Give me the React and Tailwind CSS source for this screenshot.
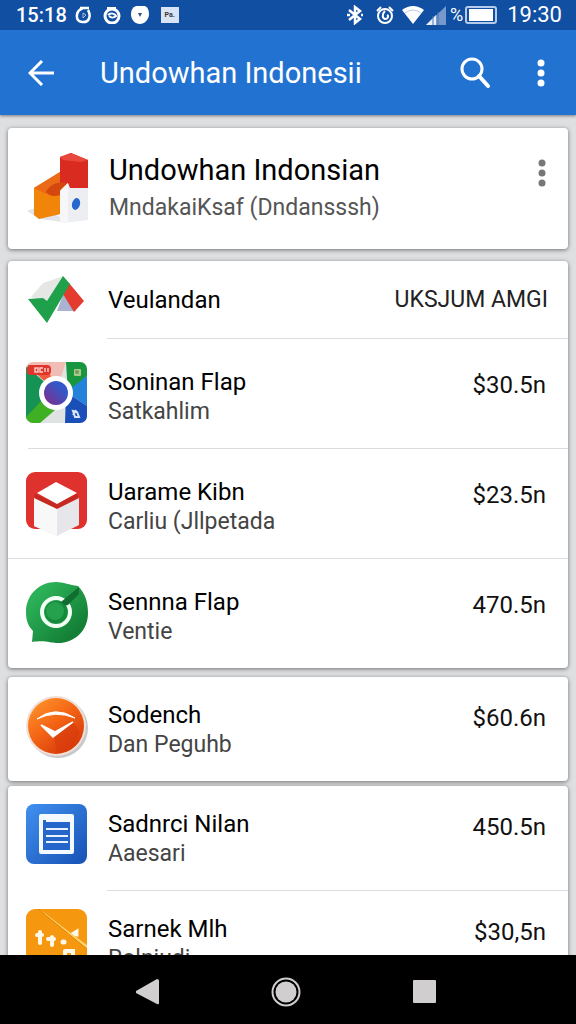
function BoxesIcon() {
  return (
    <svg viewBox="0 0 62 72" className="h-[72px] w-[62px]" aria-hidden="true">
      <path d="M0 59 L10 55 L36 66 L36 70 L12 67 Z" fill="#e3e4ea" />
      <path d="M33 5 L44 1 L61 8 V37 H33 Z" fill="#d92b20" />
      <path d="M33 5 L44 1 L61 8 L54 10 L36 8 Z" fill="#e8493c" />
      <path d="M7 36 L33 20 V34 L41 31 L34 39 L34 62 L12 67 L7 63 Z" fill="#f0850a" />
      <path d="M7 36 L33 20 V31 L19 42 Z" fill="#ea6a18" />
      <path d="M19 40 C23 32 31 29 41 31 L34 37 L33 43 C27 45 22 44 19 40 Z" fill="#d4470f" />
      <path d="M33 39 L41 31 L43 36 L61 36 V68 L36 71 L33 69 Z" fill="#eceef2" />
      <path d="M33 39 L41 31 L41 70 L36 71 L33 69 Z" fill="#f7f7f9" />
      <ellipse cx="49" cy="52" rx="4" ry="6" fill="#2467cf" transform="rotate(15 49 52)" />
    </svg>
  );
}

function CheckIcon() {
  return (
    <svg viewBox="0 0 62 48" className="h-12 w-[62px]" aria-hidden="true">
      <path d="M5 21 L17 7 L38 0 L22 27 Z" fill="#e5e7e5" />
      <path d="M38 16 L46 22 L50 35 L31 35 Z" fill="#aab3d2" />
      <path d="M43 7 L58 25 L48 36 L37 18 Z" fill="#e33b2e" />
      <path d="M2 23 L17 22 L21 25 L37 0 L44 8 L21 47 Z" fill="#1fa04a" />
    </svg>
  );
}

function CameraIcon() {
  return (
    <svg viewBox="0 0 61 61" className="size-[61px]" aria-hidden="true">
      <defs>
        <clipPath id="camera-clip">
          <rect width="61" height="61" rx="7" />
        </clipPath>
        <linearGradient id="camera-lens" x1="0" y1="1" x2="1" y2="0">
          <stop offset="0.1" stopColor="#7a3090" />
          <stop offset="0.7" stopColor="#3558c8" />
        </linearGradient>
      </defs>
      <g clipPath="url(#camera-clip)">
        <rect width="61" height="61" fill="#dfe3e1" />
        <path d="M0 4 L30 30 L0 57 Z" fill="#159254" />
        <path d="M0 0 H40 L30 30 Z" fill="#f0bdb4" />
        <path d="M0 2 L30 30 L24 12 Z" fill="#ef5a3a" />
        <path d="M40 0 H61 V14 L42 32 Z" fill="#17963f" />
        <path d="M61 14 V44 L40 30 Z" fill="#2383da" />
        <path d="M40 30 L61 44 V61 H39 Z" fill="#1b4fb8" />
        <path d="M0 55 L22 32 L36 42 L14 61 H0 Z" fill="#3fb024" />
        <rect x="1" y="3" width="24" height="10" rx="4" fill="#e0352b" />
        <g fill="none" stroke="#fbd0ca" strokeWidth="1.4">
          <rect x="9" y="6" width="3" height="4" />
          <path d="M17 6 h-3 v4 h3 M19 6 v4 M22 6 v4" />
        </g>
        <rect x="48" y="7" width="7" height="7" rx="1" fill="#a9c98b" />
        <circle cx="51" cy="10" r="2" fill="#6e9f58" />
        <circle cx="30" cy="31" r="17" fill="#fff" />
        <circle cx="30" cy="31" r="12" fill="url(#camera-lens)" />
        <path d="M47 49 L51 50 L53 55 L49 55 Z M50 48 L47 53" fill="none" stroke="#d7e4fa" strokeWidth="2" />
      </g>
    </svg>
  );
}

function CubeIcon() {
  return (
    <svg viewBox="0 0 61 64" className="h-16 w-[61px]" aria-hidden="true">
      <rect width="61" height="57" rx="9" fill="#df312d" />
      <path d="M8 25 L31 36 L53 25 V53 L31 64 L8 54 Z" fill="#e6e6eb" />
      <path d="M8 25 L31 36 V64 L8 54 Z" fill="#f8f8f9" />
      <path d="M9 22 L30 31 L51 22 L53 26 L31 37 L8 26 Z" fill="#c5291f" />
      <path d="M30 10 L51 21 L31 32 L11 21 Z" fill="#fff" />
    </svg>
  );
}

function ChatIcon() {
  return (
    <svg viewBox="0 0 62 62" className="size-[62px]" aria-hidden="true">
      <defs>
        <linearGradient id="chat-fill" x1="0" y1="0" x2="1" y2="1">
          <stop offset="0.2" stopColor="#2bb158" />
          <stop offset="0.8" stopColor="#148036" />
        </linearGradient>
      </defs>
      <path d="M30 0 C38 0 43 3 52 4 C59 11 62 20 62 31 C62 49 48 62 30 61 C24 61 20 58 6 60 L7 49 C2 44 0 38 0 30 C0 13 13 0 30 0 Z" fill="url(#chat-fill)" />
      <circle cx="30" cy="30" r="14" fill="none" stroke="#f1fff4" strokeWidth="4" />
      <path d="M53 5 L53 12 L42 23 L37 24 L35 20 Z" fill="#0f6e30" />
      <circle cx="30" cy="30" r="11" fill="#158a3a" />
      <circle cx="29" cy="29" r="9" fill="#25a14d" />
    </svg>
  );
}

function DialIcon() {
  return (
    <svg viewBox="0 0 63 65" className="h-[65px] w-[63px]" aria-hidden="true">
      <defs>
        <linearGradient id="dial-fill" x1="0.1" y1="0" x2="0.8" y2="0.9">
          <stop offset="0" stopColor="#ff962d" />
          <stop offset="0.5" stopColor="#f46515" />
          <stop offset="1" stopColor="#d63a0c" />
        </linearGradient>
      </defs>
      <circle cx="32" cy="33" r="30" fill="#c8c8cc" />
      <circle cx="30" cy="31" r="30" fill="#f1dfd5" />
      <circle cx="30" cy="31" r="28" fill="url(#dial-fill)" />
      <path d="M28 42 L47 27 L54 37 L44 55 L31 58 Z" fill="#d93a0b" opacity="0.6" />
      <path d="M11 24 Q29 10 49 23 Q29 15 11 24 Z" fill="#fff" stroke="#fff" strokeWidth="1" />
      <path d="M15 30 L27 42 L47 27 L29 37 Z" fill="#fff" stroke="#fff" strokeWidth="1.5" />
    </svg>
  );
}

function DocIcon() {
  return (
    <svg viewBox="0 0 61 60" className="h-[60px] w-[61px]" aria-hidden="true">
      <defs>
        <linearGradient id="doc-fill" x1="0" y1="0" x2="1" y2="1">
          <stop offset="0" stopColor="#4090ef" />
          <stop offset="1" stopColor="#1752b5" />
        </linearGradient>
      </defs>
      <rect width="61" height="60" rx="8" fill="url(#doc-fill)" />
      <rect x="13" y="10" width="35" height="40" rx="2" fill="#f4f9ff" />
      <path d="M17 16 H20 V18 H44 V46 H17 Z" fill="#2666cb" />
      <path d="M20 25 H42 M20 32 H42 M20 38 H42" stroke="#e9f3ff" strokeWidth="2" />
    </svg>
  );
}

function PencilIcon() {
  return (
    <svg viewBox="0 0 61 61" className="size-[61px]" aria-hidden="true">
      <rect width="61" height="61" rx="9" fill="#f6980f" />
      <g fill="none" stroke="#fff8e8" strokeWidth="4" strokeLinecap="round">
        <path d="M14 23 V34 M11 26 H16 M26 28 V36 M22 30 H28" />
        <path d="M46 25 L51 22 V26 Z" strokeWidth="3" />
        <path d="M37 33 h1" strokeWidth="5" />
        <path d="M39 42 H47 V46 M39 42 V46" />
      </g>
      <path d="M12 0 L61 40 V36 L42 22 L20 5 Z" fill="#ffd067" />
      <path d="M12 0 L61 40" stroke="#d98107" strokeWidth="1" />
    </svg>
  );
}

function MoreIcon({ className }) {
  return (
    <svg viewBox="0 0 8 28" className={className} fill="currentColor" aria-hidden="true">
      <circle cx="4" cy="4" r="3.5" />
      <circle cx="4" cy="14" r="3.5" />
      <circle cx="4" cy="24" r="3.5" />
    </svg>
  );
}

const groups = [
  {
    id: 'apps',
    className: 'mt-3',
    items: [
      { icon: CheckIcon, title: 'Veulandan', value: 'UKSJUM AMGI', single: true },
      { icon: CameraIcon, title: 'Soninan Flap', subtitle: 'Satkahlim', value: '$30.5n', divider: 'ml-[99px]' },
      { icon: CubeIcon, title: 'Uarame Kibn', subtitle: 'Carliu (Jllpetada', value: '$23.5n', divider: 'ml-5' },
      { icon: ChatIcon, title: 'Sennna Flap', subtitle: 'Ventie', value: '470.5n', divider: 'ml-0' },
    ],
  },
  {
    id: 'sodench',
    className: 'mt-[9px]',
    compact: true,
    items: [{ icon: DialIcon, title: 'Sodench', subtitle: 'Dan Peguhb', value: '$60.6n' }],
  },
  {
    id: 'more',
    className: 'mt-[5px]',
    compact: true,
    items: [
      { icon: DocIcon, title: 'Sadnrci Nilan', subtitle: 'Aaesari', value: '450.5n' },
      { icon: PencilIcon, title: 'Sarnek Mlh', subtitle: 'Rolniudi', value: '$30,5n', divider: 'ml-[99px]' },
    ],
  },
];

function AppRow({ item, compact }) {
  const Icon = item.icon;

  if (item.single) {
    return (
      <li className="flex h-[77px] items-center pr-5 pl-[18px]">
        <Icon />
        <h2 className="ml-5 flex-1 text-2xl leading-7">{item.title}</h2>
        <span className="text-[23px] leading-7 text-[#222]">{item.value}</span>
      </li>
    );
  }

  return (
    <li>
      {item.divider && <div className={`h-px bg-[#dcdcdc] ${item.divider}`} />}
      <div className={`flex items-start pr-[22px] pl-[18px] ${compact ? 'h-[104px] pt-[18px]' : 'h-[109px] pt-[23px]'}`}>
        <div className="w-[62px] shrink-0">
          <Icon />
        </div>
        <div className="ml-5 flex-1 pt-[6px]">
          <h2 className="text-2xl leading-7">{item.title}</h2>
          <p className="pt-0.5 text-[23px] leading-7 text-[#444]">{item.subtitle}</p>
        </div>
        <span className="pt-[9px] text-2xl leading-7 text-[#111]">{item.value}</span>
      </div>
    </li>
  );
}

function StatusBar() {
  return (
    <div className="flex h-[30px] shrink-0 items-center justify-between bg-[#114fa3] pr-[14px] pl-4 text-[22px] leading-none">
      <div className="flex items-center">
        <span className="mr-2 text-xl leading-none font-medium">15:18</span>
        <svg viewBox="0 0 16 18" className="mr-3 h-[18px] w-4" fill="none" stroke="currentColor" strokeWidth="2.5" aria-hidden="true">
          <path d="M8 2 C0 5 0 15 7 16 C15 17 16 9 13 4 M5 2 H14" />
          <path d="M8 7 L11 9 L8 12 Z" strokeWidth="1" opacity="0.6" />
        </svg>
        <svg viewBox="0 0 18 18" className="mr-[10px] size-[18px]" fill="none" stroke="currentColor" strokeWidth="3" aria-hidden="true">
          <circle cx="9" cy="10" r="7" />
          <path d="M5 9 C8 6 12 8 13 10 C11 12 8 12 6 10 M4 2 H13" strokeWidth="2" />
        </svg>
        <svg viewBox="0 0 18 18" className="mr-3 size-[18px]" aria-hidden="true">
          <path d="M5 0 H14 Q18 2 18 8 C18 14 13 18 9 18 C4 18 0 14 0 8 Q0 2 5 0 Z" fill="#fff" />
          <path d="M7 7 H11 L9 11 Z" fill="#2b4d80" />
        </svg>
        <span className="flex h-4 w-[18px] items-center justify-center bg-[#d8e3f5] text-[7px] font-bold text-[#333]">Pa.</span>
      </div>
      <div className="flex items-center">
        <svg viewBox="0 0 18 20" className="mr-3 h-5 w-[18px]" fill="none" stroke="currentColor" strokeWidth="2.5" aria-hidden="true">
          <path d="M3 5 L14 14 L9 18 V2 L14 6 L3 15 M1 10 H4 M15 10 H17" />
        </svg>
        <svg viewBox="0 0 18 18" className="mr-2 size-[18px]" fill="none" stroke="currentColor" strokeWidth="2" aria-hidden="true">
          <circle cx="9" cy="10" r="7" />
          <path d="M1 5 L5 1 M13 1 L17 5 M9 5 C6 8 6 12 9 13 C12 13 13 10 11 9" />
        </svg>
        <svg viewBox="0 0 22 18" className="mr-0.5 h-[18px] w-[22px]" fill="currentColor" aria-hidden="true">
          <path d="M0 4 Q11 -4 22 4 L11 18 Z" />
          <path d="M3 7 Q11 1 19 7" fill="none" stroke="#9db9e0" strokeWidth="0.7" />
        </svg>
        <svg viewBox="0 0 20 19" className="mr-1 h-[19px] w-5" aria-hidden="true">
          <path d="M0 19 L20 0 V19 Z" fill="#7798cb" />
          <path d="M0 19 L10 9 V19 Z" fill="#e8f0fb" />
          <path d="M7 10 V19 M12 6 V19" stroke="#4874b6" strokeWidth="1" />
        </svg>
        <span className="mr-0.5 text-lg leading-none">%</span>
        <svg viewBox="0 0 32 18" className="mr-[10px] h-[18px] w-8" aria-hidden="true">
          <rect x="1" y="1" width="30" height="16" rx="2" fill="none" stroke="#b5cbea" strokeWidth="2" />
          <rect x="4" y="3" width="24" height="12" fill="#fff" />
        </svg>
        <span>19:30</span>
      </div>
    </div>
  );
}

export default function App() {
  return (
    <div className="flex h-screen flex-col overflow-hidden bg-[#dedfe1] font-['Roboto','Liberation_Sans',sans-serif] text-black">
      <header className="z-10 shrink-0 bg-[#2273d1] text-white shadow-[0_1px_3px_rgba(0,0,0,0.45)]">
        <StatusBar />
        <div className="flex h-[85px] items-center pr-[31px] pl-7">
          <button type="button" aria-label="Back">
            <svg viewBox="0 0 26 26" className="size-[26px]" fill="none" stroke="currentColor" strokeWidth="3" aria-hidden="true">
              <path d="M14 1 L2 13 L14 25 M2 13 H26" />
            </svg>
          </button>
          <h1 className="ml-[46px] flex-1 text-[29px] leading-9">Undowhan Indonesii</h1>
          <button type="button" aria-label="Search" className="mr-[46px]">
            <svg viewBox="0 0 32 32" className="size-8" fill="none" stroke="currentColor" aria-hidden="true">
              <circle cx="13" cy="12" r="10" strokeWidth="3" />
              <path d="M20 19 L29 29" strokeWidth="4" strokeLinecap="round" />
            </svg>
          </button>
          <button type="button" aria-label="More options">
            <MoreIcon className="h-7 w-2" />
          </button>
        </div>
      </header>

      <main className="min-h-0 flex-1 overflow-hidden px-2 pt-[13px]">
        <section className="flex h-[121px] items-start rounded-sm bg-white pr-[22px] pl-[19px] shadow-[0_1px_4px_rgba(0,0,0,0.5)]">
          <div className="pt-6">
            <BoxesIcon />
          </div>
          <div className="ml-5 flex-1 pt-6">
            <h2 className="text-[29px] leading-9">Undowhan Indonsian</h2>
            <p className="pt-1 text-[23px] leading-8 text-[#555]">MndakaiKsaf (Dndansssh)</p>
          </div>
          <button type="button" aria-label="App options" className="pt-[31px] text-[#777]">
            <MoreIcon className="h-7 w-2" />
          </button>
        </section>

        {groups.map((group) => (
          <ul key={group.id} className={`rounded-sm bg-white shadow-[0_1px_4px_rgba(0,0,0,0.5)] ${group.className}`}>
            {group.items.map((item) => (
              <AppRow key={item.title} item={item} compact={group.compact} />
            ))}
          </ul>
        ))}
      </main>

      <nav className="z-10 flex h-[69px] shrink-0 items-center justify-center gap-[112px] bg-black pt-1 pr-1 text-[#d0cece]">
        <button type="button" aria-label="Back">
          <svg viewBox="0 0 24 26" className="h-[26px] w-6" fill="currentColor" aria-hidden="true">
            <path d="M1 12 L22 0 Q24 0 24 2 V24 Q24 26 22 25 L1 14 Z" />
          </svg>
        </button>
        <button type="button" aria-label="Home">
          <svg viewBox="0 0 30 30" className="size-[30px]" aria-hidden="true">
            <circle cx="15" cy="15" r="13.5" fill="none" stroke="currentColor" strokeWidth="2" />
            <circle cx="15" cy="15" r="10.5" fill="currentColor" />
          </svg>
        </button>
        <button type="button" aria-label="Recent apps">
          <svg viewBox="0 0 24 24" className="size-6" fill="currentColor" aria-hidden="true">
            <rect width="23" height="23" rx="1" />
          </svg>
        </button>
      </nav>
    </div>
  );
}
